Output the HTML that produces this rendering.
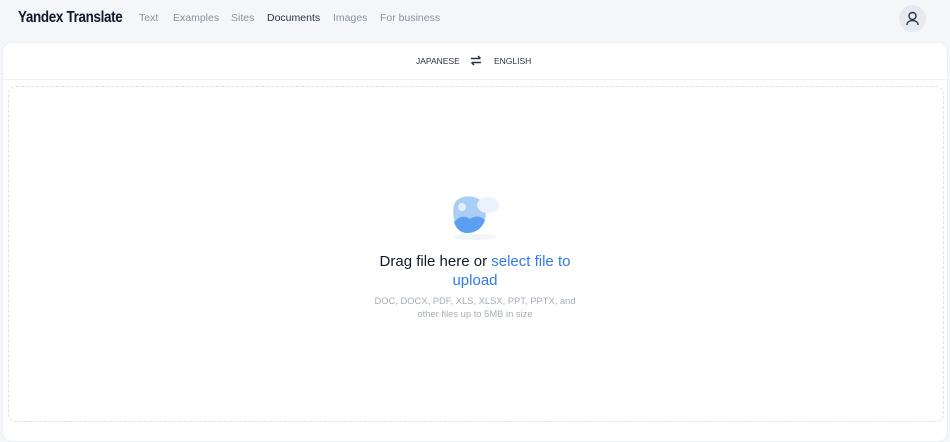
<!DOCTYPE html>
<html><head><style>
*{margin:0;padding:0;box-sizing:border-box}
body{width:950px;height:428px;background:#f4f6f9;font-family:"Liberation Sans",sans-serif;position:relative;overflow:hidden}
.logo{position:absolute;left:18px;top:9px;font-size:16px;font-weight:bold;color:#0f1a2b;letter-spacing:-0.4px;transform:scaleX(0.84);transform-origin:left}
.nav span{position:absolute;top:12px;font-size:10.5px;color:#8a929c;white-space:nowrap}
.nav .a{color:#2b3340}
.user{position:absolute;left:899px;top:5px;width:27px;height:27px;border-radius:50%;background:#e6eaf0}
.card{position:absolute;left:2px;top:42px;width:946px;height:400px;background:#fff;border-radius:10px;border:1px solid #eceff3}
.langs{position:absolute;top:0;left:0;right:0;height:37px;border-bottom:1px solid #eceff3;font-size:8.5px;color:#2b3340}
.dash{position:absolute;left:5px;top:43px;width:936px;height:336px;border:1px dashed #dde1e6;border-radius:8px}
.t1{position:absolute;left:0;width:950px;text-align:center;top:252px;font-size:15px;color:#111a27;line-height:19px}
.t1 b{font-weight:normal;color:#2f7be8}
.t2{position:absolute;left:0;width:950px;text-align:center;top:294px;font-size:9.4px;color:#a6adb6;line-height:13px}
</style></head><body>
<div class="logo">Yandex Translate</div>
<div class="nav"><span style="left:139px">Text</span><span style="left:173px">Examples</span><span style="left:231px">Sites</span><span class="a" style="left:267px">Documents</span><span style="left:333px">Images</span><span style="left:380px">For business</span></div>
<div class="user"><svg width="27" height="27" viewBox="0 0 27 27"><circle cx="13.5" cy="11" r="3.5" fill="none" stroke="#2b3340" stroke-width="1.4"/><path d="M8 20c0-3 2.5-4.5 5.5-4.5S19 17 19 20" fill="none" stroke="#2b3340" stroke-width="1.4"/></svg></div>
<div class="card">
<div class="langs"><span style="position:absolute;left:413px;top:13px">JAPANESE</span>
<svg style="position:absolute;left:467px;top:12px" width="12" height="11" viewBox="0 0 12 11"><path d="M1 3.5h9M8 1l2.5 2.5M11 7.5H2M4 10L1.5 7.5" stroke="#2b3340" stroke-width="1.5" fill="none"/></svg>
<span style="position:absolute;left:491px;top:13px">ENGLISH</span></div>
<div class="dash"></div>
</div>
<svg style="position:absolute;left:440px;top:190px" width="70" height="52" viewBox="0 0 70 52"><ellipse cx="35" cy="47" rx="22" ry="3" fill="#f1f4f8"/><path d="M14 15c3-11 25-12 30 0 6 13-3 28-17 28C17 43 11 28 14 15z" fill="#a9cdf5"/><path d="M14 32c6-6 10-7 16-3 6-4 10-3 15 1-3 9-10 13-18 13-6 0-11-4-13-11z" fill="#5b9ff0"/><circle cx="22" cy="17" r="4" fill="#e2eefc"/><ellipse cx="48" cy="15" rx="11" ry="8" fill="#e9f2fd"/></svg>
<div class="t1">Drag file here or <b>select file to<br>upload</b></div>
<div class="t2">DOC, DOCX, PDF, XLS, XLSX, PPT, PPTX, and<br>other files up to 5MB in size</div>
</body></html>
